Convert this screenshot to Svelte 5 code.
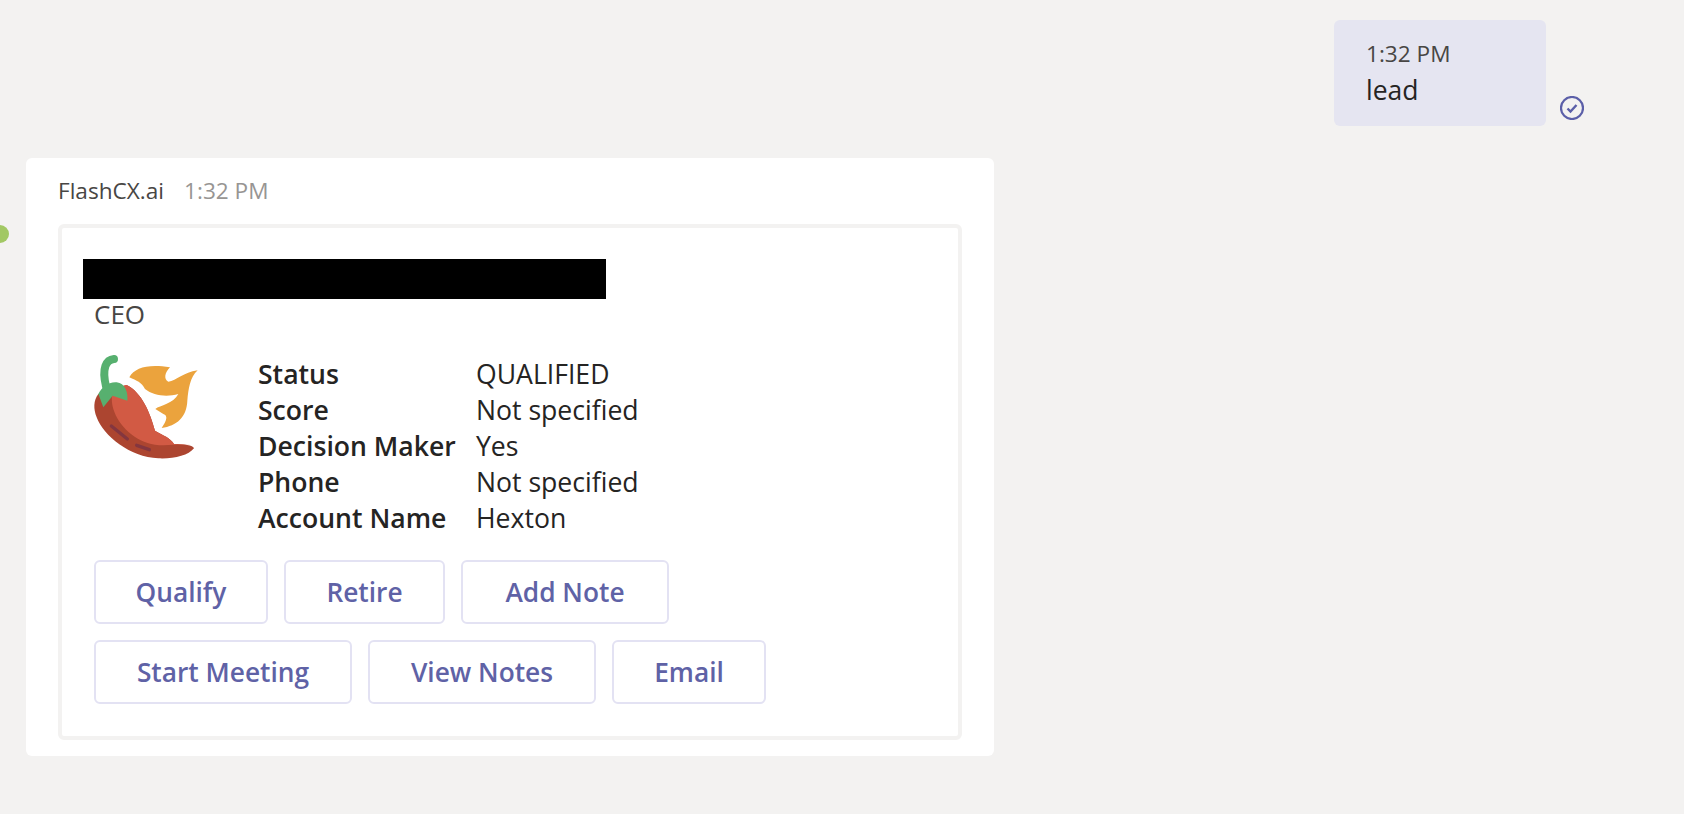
<script>
    const facts = [
        { label: 'Status', value: 'QUALIFIED' },
        { label: 'Score', value: 'Not specified' },
        { label: 'Decision Maker', value: 'Yes' },
        { label: 'Phone', value: 'Not specified' },
        { label: 'Account Name', value: 'Hexton' }
    ];
    const actionRows = [
        [{ title: 'Qualify', width: 174 }, { title: 'Retire', width: 161 }, { title: 'Add Note', width: 208 }],
        [{ title: 'Start Meeting', width: 258 }, { title: 'View Notes', width: 228 }, { title: 'Email', width: 154 }]
    ];
</script>

<div class="page">
    <div class="sent">
        <div class="bubble">
            <div class="bubble_time">1:32 PM</div>
            <div class="bubble_text">lead</div>
        </div>
        <svg class="read" viewBox="0 0 24 24" width="24" height="24">
            <circle cx="12" cy="12" r="11" fill="none" stroke="#5b5fa8" stroke-width="2.2" />
            <path d="M7.5 12.5l3 3 6-6.5" fill="none" stroke="#5b5fa8" stroke-width="2.4" />
        </svg>
    </div>

    <div class="received">
        <span class="presence"></span>
        <div class="card">
            <div class="meta">
                <span class="sender">FlashCX.ai</span>
                <span class="time">1:32 PM</span>
            </div>
            <div class="adaptive">
                <div class="redacted"></div>
                <div class="body">
                    <div class="title">CEO</div>
                    <div class="summary">
                        <svg class="chili" viewBox="0 0 480 420" width="160" height="140">
                            <path fill="#eba33d" d="M178 145C195 115 235 105 300 115C285 130 280 150 295 158C320 155 340 130 383 124C360 145 355 180 352 215C350 265 320 290 275 297C290 275 295 260 280 255L256 240C270 228 310 225 325 195C290 205 250 200 225 180C215 160 200 155 178 145Z" />
                            <path fill="#ac4530" d="M85 195C70 215 70 240 80 265C100 320 180 385 265 388C310 390 355 380 372 358C370 348 340 345 312 345C300 325 280 320 255 305C240 250 215 190 170 168Z" />
                            <path fill="#d25a44" d="M170 168C125 175 120 200 130 240C145 290 195 338 255 347C290 352 330 343 362 348C345 344 325 345 312 345C300 325 280 320 255 305C240 250 215 190 170 168Z" />
                            <path fill="none" stroke="#84363f" stroke-width="10" stroke-linecap="round" d="M124 291L172 330M200 349L238 362" />
                            <path fill="none" stroke="#57b06f" stroke-width="24" stroke-linecap="round" d="M132 90C108 92 95 118 108 172" />
                            <path fill="#57b06f" d="M85 195L100 235L128 200L172 215C175 190 165 163 140 160C115 158 95 175 85 195Z" />
                        </svg>
                        <div class="facts">
                            {#each facts as fact}
                                <div class="fact_label">{fact.label}</div>
                                <div class="fact_value">{fact.value}</div>
                            {/each}
                        </div>
                    </div>
                    <div class="actions">
                        {#each actionRows as row}
                            <div class="action_row">
                                {#each row as action}
                                    <button class="action" style="width: {action.width}px">{action.title}</button>
                                {/each}
                            </div>
                        {/each}
                    </div>
                </div>
            </div>
        </div>
    </div>
</div>

<style>
    :global(body) {
        background: #f3f2f1;
    }
    .page {
        height: 814px;
        box-sizing: border-box;
        padding-top: 20px;
        overflow: hidden;
        font-family: "Open Sans", "Noto Sans", sans-serif;
        color: #252423;
    }
    .sent {
        display: flex;
        justify-content: flex-end;
        align-items: flex-end;
        padding-right: 100px;
    }
    .bubble {
        width: 212px;
        height: 106px;
        box-sizing: border-box;
        padding: 17px 0 0 32px;
        background: #e5e5f1;
        border-radius: 6px;
    }
    .bubble_time {
        font-size: 22.6px;
        line-height: 33px;
        color: #484644;
    }
    .bubble_text {
        font-size: 26.5px;
        line-height: 40px;
    }
    .read {
        margin: 0 0 6px 14px;
    }
    .received {
        position: relative;
        padding: 32px 0 0 26px;
    }
    .presence {
        position: absolute;
        left: -9px;
        top: 99px;
        width: 18px;
        height: 18px;
        border-radius: 50%;
        background: #a2c864;
    }
    .card {
        width: 968px;
        height: 598px;
        box-sizing: border-box;
        padding: 16px 32px 0;
        background: #fff;
        border-radius: 6px;
    }
    .meta {
        display: flex;
        gap: 20px;
        height: 50px;
        font-size: 22.6px;
        line-height: 34px;
    }
    .sender {
        color: #484644;
    }
    .time {
        color: #979593;
    }
    .adaptive {
        height: 516px;
        box-sizing: border-box;
        padding: 31px 0 0 21px;
        border: 4px solid #f3f2f1;
        border-radius: 6px;
    }
    .redacted {
        width: 523px;
        height: 40px;
        background: #000;
    }
    .body {
        padding-left: 11px;
    }
    .title {
        font-size: 26px;
        line-height: 30px;
        color: #484644;
    }
    .summary {
        display: flex;
        margin-top: 27px;
    }
    .chili {
        margin: -27px 28px 0 -24px;
        flex: none;
    }
    .facts {
        display: grid;
        grid-template-columns: 218px auto;
        grid-auto-rows: 36px;
        font-size: 26.6px;
        line-height: 36px;
    }
    .fact_label {
        font-weight: 600;
    }
    .actions {
        display: flex;
        flex-direction: column;
        gap: 16px;
        margin-top: 24px;
    }
    .action_row {
        display: flex;
        gap: 16px;
    }
    .action {
        height: 64px;
        padding: 0;
        background: #fff;
        border: 2px solid #e3e2f3;
        border-radius: 6px;
        font-family: inherit;
        font-size: 26.3px;
        font-weight: 600;
        color: #5f62a6;
    }
</style>
